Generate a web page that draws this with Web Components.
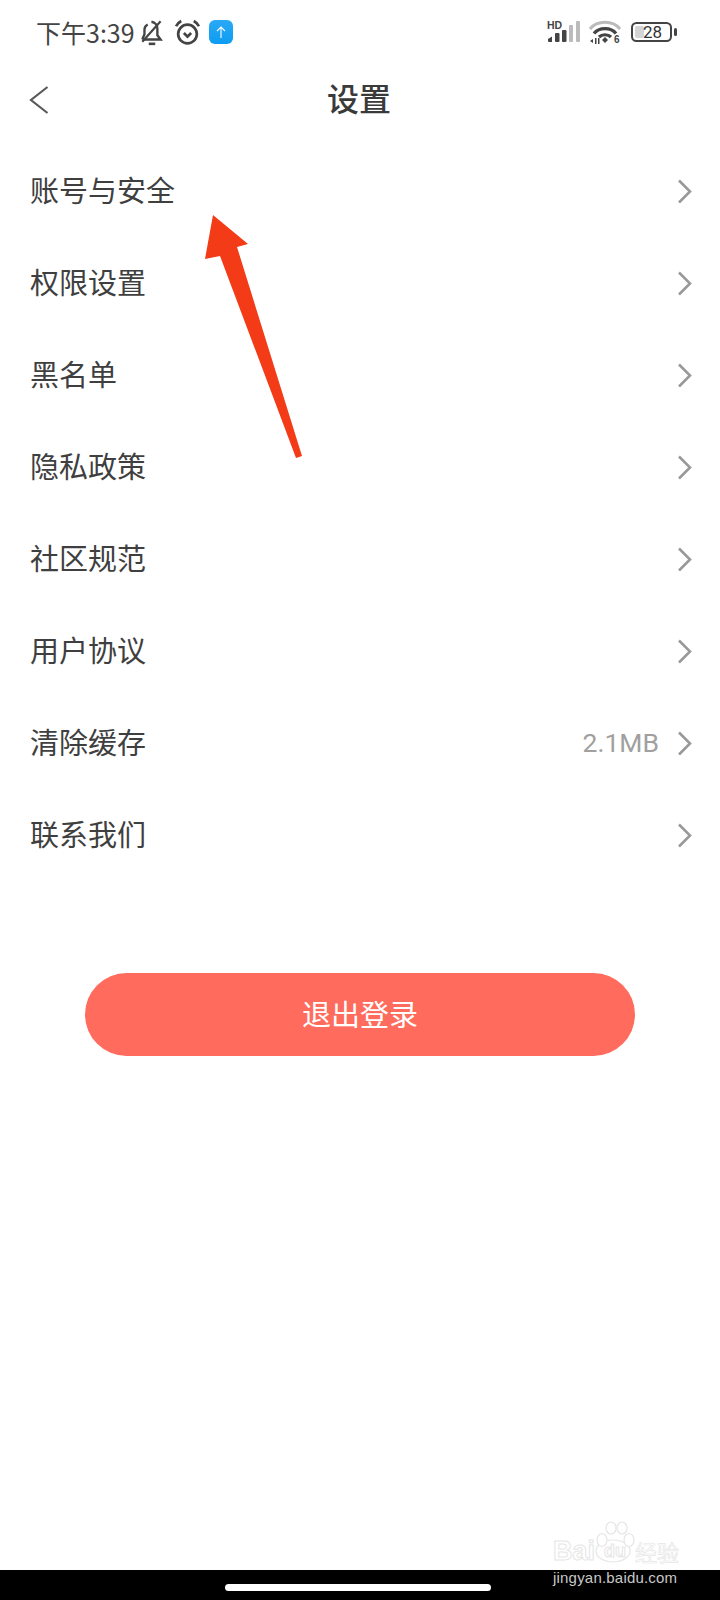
<!DOCTYPE html>
<html lang="zh">
<head>
<meta charset="utf-8">
<title>设置</title>
<style>
  html, body { margin: 0; padding: 0; background: #fff; }
  body { font-family: "Noto Sans CJK SC", "Noto Sans", sans-serif; }
</style>
</head>
<body>
<settings-page>
  <setting-row label="账号与安全"></setting-row>
  <setting-row label="权限设置"></setting-row>
  <setting-row label="黑名单"></setting-row>
  <setting-row label="隐私政策"></setting-row>
  <setting-row label="社区规范"></setting-row>
  <setting-row label="用户协议"></setting-row>
  <setting-row label="清除缓存" value="2.1MB"></setting-row>
  <setting-row label="联系我们"></setting-row>
</settings-page>

<script>
// --- Status bar ---
class StatusBar extends HTMLElement {
  constructor() {
    super();
    this.attachShadow({ mode: 'open' });
  }

  connectedCallback() {
    this.shadowRoot.innerHTML = `
      <style>
        :host {
          display: flex;
          align-items: center;
          justify-content: space-between;
          height: 64px;
          padding: 0 43px 0 36px;
          color: #444;
        }
        .left, .right { display: flex; align-items: center; }
        .time { font: 400 25px/30px "Noto Sans CJK SC", sans-serif; margin-right: 4px; }
        svg { display: block; }
      </style>
      <div class="left">
        <span class="time">下午3:39</span>
        <svg width="26" height="28" viewBox="0 0 24 26" fill="none" stroke="#444" stroke-width="2.200">
          <path d="M3 20h17l-3-4v-6c0-3-2-6-5.500-6.500M8 6c-2 1-3 3-3 5v4l-2 5"/>
          <path d="M3 22 20 3" stroke-width="2"/>
          <path d="M9 24h6" stroke-width="2.400"/>
        </svg>
        <svg style="margin-left:9px" width="27" height="27" viewBox="0 0 26 26" fill="none" stroke="#444" stroke-width="2.600">
          <circle cx="13" cy="14.500" r="9"/>
          <path d="M9.500 13.500 13 17l3.500-3.500"/>
          <path d="M2 7c1-2 3-4 5-5M24 7c-1-2-3-4-5-5"/>
        </svg>
        <svg style="margin-left:8px" width="24" height="24" viewBox="0 0 24 24">
          <defs><linearGradient id="g" x1="0" y1="0" x2="0" y2="1"><stop offset="0" stop-color="#29a9f5"/><stop offset="1" stop-color="#0d9cf2"/></linearGradient></defs>
          <rect width="24" height="24" rx="6" fill="url(#g)"/>
          <path d="M12 18V7M8 11l4-4 4 4" fill="none" stroke="#fff" stroke-width="1.100"/>
        </svg>
      </div>
      <div class="right">
        <svg width="34" height="24" viewBox="0 0 34 24">
          <text x="0" y="9" font-family="Liberation Sans, sans-serif" font-size="10.500" font-weight="700" fill="#444">HD</text>
          <path d="M1 19l4-2.500V22H2a1 1 0 0 1-1-1z" fill="#444"/>
          <rect x="8" y="13" width="4.500" height="9" rx="1" fill="#444"/>
          <rect x="15" y="10" width="4.500" height="12" rx="1" fill="#444"/>
          <rect x="22" y="5" width="4" height="17" rx="1" fill="#bbb"/>
          <rect x="29" y="1" width="4" height="21" rx="1" fill="#bbb"/>
        </svg>
        <svg style="margin-left:8px" width="32" height="26" viewBox="0 0 32 26" fill="none" stroke-width="3.200">
          <path d="M1 10C8 1 24 1 31 10" stroke="#bbb"/>
          <path d="M5 14.500C10 8 22 8 27 14.500" stroke="#444"/>
          <path d="M10 18c3-3 9-3 12 0" stroke="#444"/>
          <path d="M13 21l3-3 3 3-3 3z" fill="#444" stroke="none"/>
          <path d="M1 22l3-2v4zM6 19h1.500v6H6zM9 19h1.500v6H9z" fill="#444" stroke="none"/>
          <text x="25" y="24" font-family="Liberation Sans, sans-serif" font-size="10" font-weight="700" fill="#444" stroke="none">6</text>
        </svg>
        <svg style="margin-left:10px" width="46" height="20" viewBox="0 0 46 20">
          <rect x="1" y="1" width="39" height="18" rx="4.500" fill="#fff" stroke="#444" stroke-width="2"/>
          <rect x="4" y="4" width="9" height="12" rx="2" fill="#d4d4d4"/>
          <rect x="43" y="6" width="3" height="8" rx="1.500" fill="#444"/>
          <text x="21.500" y="16" text-anchor="middle" font-family="Roboto, sans-serif" font-size="17" fill="#333">28</text>
        </svg>
      </div>
    `;
  }
}
customElements.define('status-bar', StatusBar);

// --- Nav bar ---
class NavBar extends HTMLElement {
  constructor() {
    super();
    this.attachShadow({ mode: 'open' });
  }

  connectedCallback() {
    const title = this.getAttribute('title');
    this.removeAttribute('title');
    this.shadowRoot.innerHTML = `
      <style>
        :host {
          display: grid;
          grid-template-columns: 1fr auto 1fr;
          align-items: center;
          height: 72px;
          padding-left: 29px;
          padding-right: 29px;
        }
        h1 { margin: 0 0 6px -2px; font: 500 32px/44px "Noto Sans CJK SC", sans-serif; color: #3a3a3a; }
        svg { display: block; }
      </style>
      <svg width="20" height="28" viewBox="0 0 20 28" fill="none" stroke="#5a5a5a" stroke-width="2.200">
        <path d="M18.500 1 2 14l16.500 13"/>
      </svg>
      <h1>${title}</h1>
    `;
  }
}
customElements.define('nav-bar', NavBar);

// --- Setting row ---
class SettingRow extends HTMLElement {
  constructor() {
    super();
    this.attachShadow({ mode: 'open' });
  }

  connectedCallback() {
    const label = this.getAttribute('label');
    const value = this.getAttribute('value');

    this.shadowRoot.innerHTML = `
      <style>
        :host {
          display: flex;
          align-items: center;
          height: 92px;
          padding: 0 28px 0 30px;
        }
        .label { flex: 1; padding-bottom: 4px; font: 400 29px/40px "Noto Sans CJK SC", sans-serif; color: #3f3f3f; }
        .value { font: 400 26.500px/40px Roboto, sans-serif; color: #a0a0a0; margin-right: 18px; }
        svg { display: block; }
      </style>
      <span class="label">${label}</span>
      ${value ? `<span class="value">${value}</span>` : ''}
      <svg width="15" height="25" viewBox="0 0 15 25" fill="none" stroke="#999" stroke-width="2.600">
        <path d="M2 1.500 13 12.500 2 23.500"/>
      </svg>
    `;
  }
}
customElements.define('setting-row', SettingRow);

// --- Logout button ---
class LogoutButton extends HTMLElement {
  constructor() {
    super();
    this.attachShadow({ mode: 'open' });
  }

  connectedCallback() {
    this.shadowRoot.innerHTML = `
      <style>
        :host {
          display: flex;
          align-items: center;
          justify-content: center;
          box-sizing: border-box;
          width: 550px;
          height: 83px;
          margin: 92px auto 0;
          padding-bottom: 3px;
          border-radius: 42px;
          background: #ff6b5d;
          color: #fff;
          font: 400 29px/40px "Noto Sans CJK SC", sans-serif;
        }
      </style>
      <slot></slot>
    `;
  }
}
customElements.define('logout-button', LogoutButton);

// --- Gesture bar at the bottom ---
class GestureBar extends HTMLElement {
  constructor() {
    super();
    this.attachShadow({ mode: 'open' });
  }

  connectedCallback() {
    this.shadowRoot.innerHTML = `
      <style>
        :host {
          display: flex;
          align-items: center;
          justify-content: center;
          height: 30px;
          box-sizing: border-box;
          padding-top: 4px;
          background: #000;
        }
        .pill { width: 266px; height: 7px; border-radius: 4px; background: #fff; margin-right: 5px; }
      </style>
      <div class="pill"></div>
    `;
  }
}
customElements.define('gesture-bar', GestureBar);

// --- Red annotation arrow, lies over the list ---
class AnnotationArrow extends HTMLElement {
  constructor() {
    super();
    this.attachShadow({ mode: 'open' });
  }

  connectedCallback() {
    this.shadowRoot.innerHTML = `
      <style>
        :host { position: absolute; left: 200px; top: 210px; width: 110px; height: 252px; pointer-events: none; }
        svg { display: block; }
      </style>
      <svg width="110" height="252" viewBox="200 210 110 252">
        <path d="M213 215 248 244 237 247 302 456 296 458 220 256 205 259Z" fill="#f33c17"/>
      </svg>
    `;
  }
}
customElements.define('annotation-arrow', AnnotationArrow);

// --- Baidu watermark, lies over the bottom right corner ---
class BaiduWatermark extends HTMLElement {
  constructor() {
    super();
    this.attachShadow({ mode: 'open' });
  }

  connectedCallback() {
    this.shadowRoot.innerHTML = `
      <style>
        :host { position: absolute; left: 550px; top: 1515px; width: 160px; height: 74px; pointer-events: none; }
        .logo { position: absolute; left: 0; top: 0; }
        .site {
          position: absolute; left: 3px; top: 53px;
          font: 400 15px/20px "Liberation Sans", sans-serif;
          letter-spacing: 0.2px;
          color: #c8c8c8;
          white-space: nowrap;
        }
        .brand, .du, .jy { position: absolute; color: #fff; -webkit-text-stroke: 1px #e6e6e6; white-space: nowrap; }
        .brand { left: 3px; top: 20px; font: 700 27px/32px "Liberation Sans", sans-serif; }
        .du { left: 54px; top: 25px; font: 700 18px/22px "Liberation Sans", sans-serif; }
        .jy { left: 85px; top: 21px; font: 400 22px/30px "Noto Sans CJK SC", sans-serif; -webkit-text-stroke: 0.700px #e6e6e6; }
      </style>
      <svg class="logo" width="90" height="50" viewBox="0 0 90 50" fill="#fff" stroke="#e6e6e6" stroke-width="1.200">
        <ellipse cx="63" cy="36" rx="17" ry="11"/>
        <ellipse cx="52" cy="25" rx="5" ry="6.500"/>
        <ellipse cx="61" cy="13" rx="5" ry="6"/>
        <ellipse cx="72" cy="13" rx="5" ry="6"/>
        <ellipse cx="79" cy="25" rx="5" ry="6.500"/>
      </svg>
      <span class="brand">Bai</span>
      <span class="du">du</span>
      <span class="jy">经验</span>
      <span class="site">jingyan.baidu.com</span>
    `;
  }
}
customElements.define('baidu-watermark', BaiduWatermark);

// --- Page shell ---
class SettingsPage extends HTMLElement {
  constructor() {
    super();
    this.attachShadow({ mode: 'open' });
  }

  connectedCallback() {
    this.shadowRoot.innerHTML = `
      <style>
        :host {
          display: flex;
          flex-direction: column;
          position: relative;
          height: 1600px;
          overflow: hidden;
          background: #fff;
        }
        .list { display: block; margin-top: 9px; }
        .spacer { flex: 1; }
      </style>
      <status-bar></status-bar>
      <nav-bar title="设置"></nav-bar>
      <div class="list"><slot></slot></div>
      <logout-button>退出登录</logout-button>
      <div class="spacer"></div>
      <gesture-bar></gesture-bar>
      <annotation-arrow></annotation-arrow>
      <baidu-watermark></baidu-watermark>
    `;
  }
}
customElements.define('settings-page', SettingsPage);
</script>
</body>
</html>
